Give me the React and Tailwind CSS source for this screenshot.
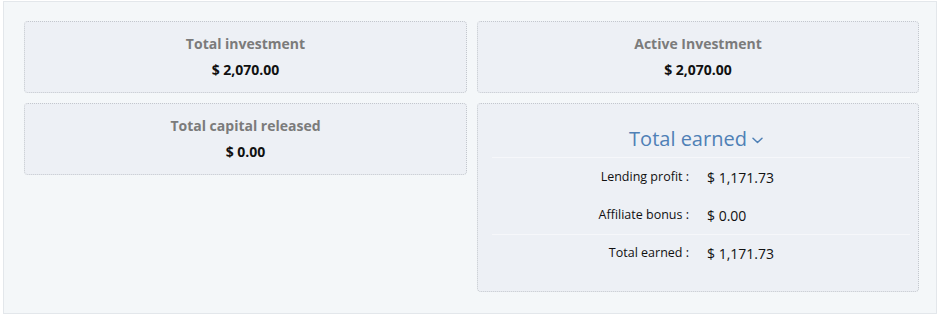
import React from "react";

function StatCard({ title, value }) {
  return (
    <div className="rounded-[4px] border border-dotted border-[#c3c7cd] bg-[#edf0f5] pt-[12px] pb-[12px] text-center">
      <div className="text-[14px] leading-[20px] font-bold text-[#7b7b7b]">{title}</div>
      <div className="mt-[6px] text-[14px] leading-[20px] font-bold text-[#111]">{value}</div>
    </div>
  );
}

function Row({ label, value, border }) {
  return (
    <div className={"grid grid-cols-2 h-[38px] items-center " + (border ? "border-t border-[#f6f7fa]" : "")}>
      <div className="text-right pr-[12px] text-[12.5px] text-[#111]">{label}</div>
      <div className="pl-[6px] text-[14px] text-[#111]">{value}</div>
    </div>
  );
}

export default function App() {
  return (
    <div className="bg-white w-[943px] h-[316px] pt-[1px] pl-[3px]" style={{ fontFamily: '"Open Sans", "Noto Sans", sans-serif' }}>
      <div className="w-[934px] h-[313px] border border-[#e3e7eb] bg-[#f4f7f9] pt-[19px] pl-[20px] grid grid-cols-[443px_442px] gap-x-[10px] items-start">
        <div className="flex flex-col gap-[10px]">
          <StatCard title="Total investment" value="$ 2,070.00" />
          <StatCard title="Total capital released" value="$ 0.00" />
        </div>
        <div className="flex flex-col gap-[10px]">
          <StatCard title="Active Investment" value="$ 2,070.00" />
          <div className="h-[189px] rounded-[4px] border border-dotted border-[#c3c7cd] bg-[#edf0f5] pt-[23px]">
            <div className="flex items-center justify-center gap-[5px] pr-[4px] text-[20px] leading-[24px] text-[#4f80b6]">
              <span>Total earned</span>
              <svg width="11" height="7" viewBox="0 0 11 7" fill="none" className="mt-[3px]">
                <path d="M1 1.2L5.5 5.5L10 1.2" stroke="#4f80b6" strokeWidth="1.5" strokeLinecap="round" strokeLinejoin="round" />
              </svg>
            </div>
            <div className="mt-[6px] ml-[14px] mr-[8px] border-t border-[#f6f7fa]">
              <Row label="Lending profit :" value="$ 1,171.73" />
              <Row label="Affiliate bonus :" value="$ 0.00" />
              <Row label="Total earned :" value="$ 1,171.73" border />
            </div>
          </div>
        </div>
      </div>
    </div>
  );
}
